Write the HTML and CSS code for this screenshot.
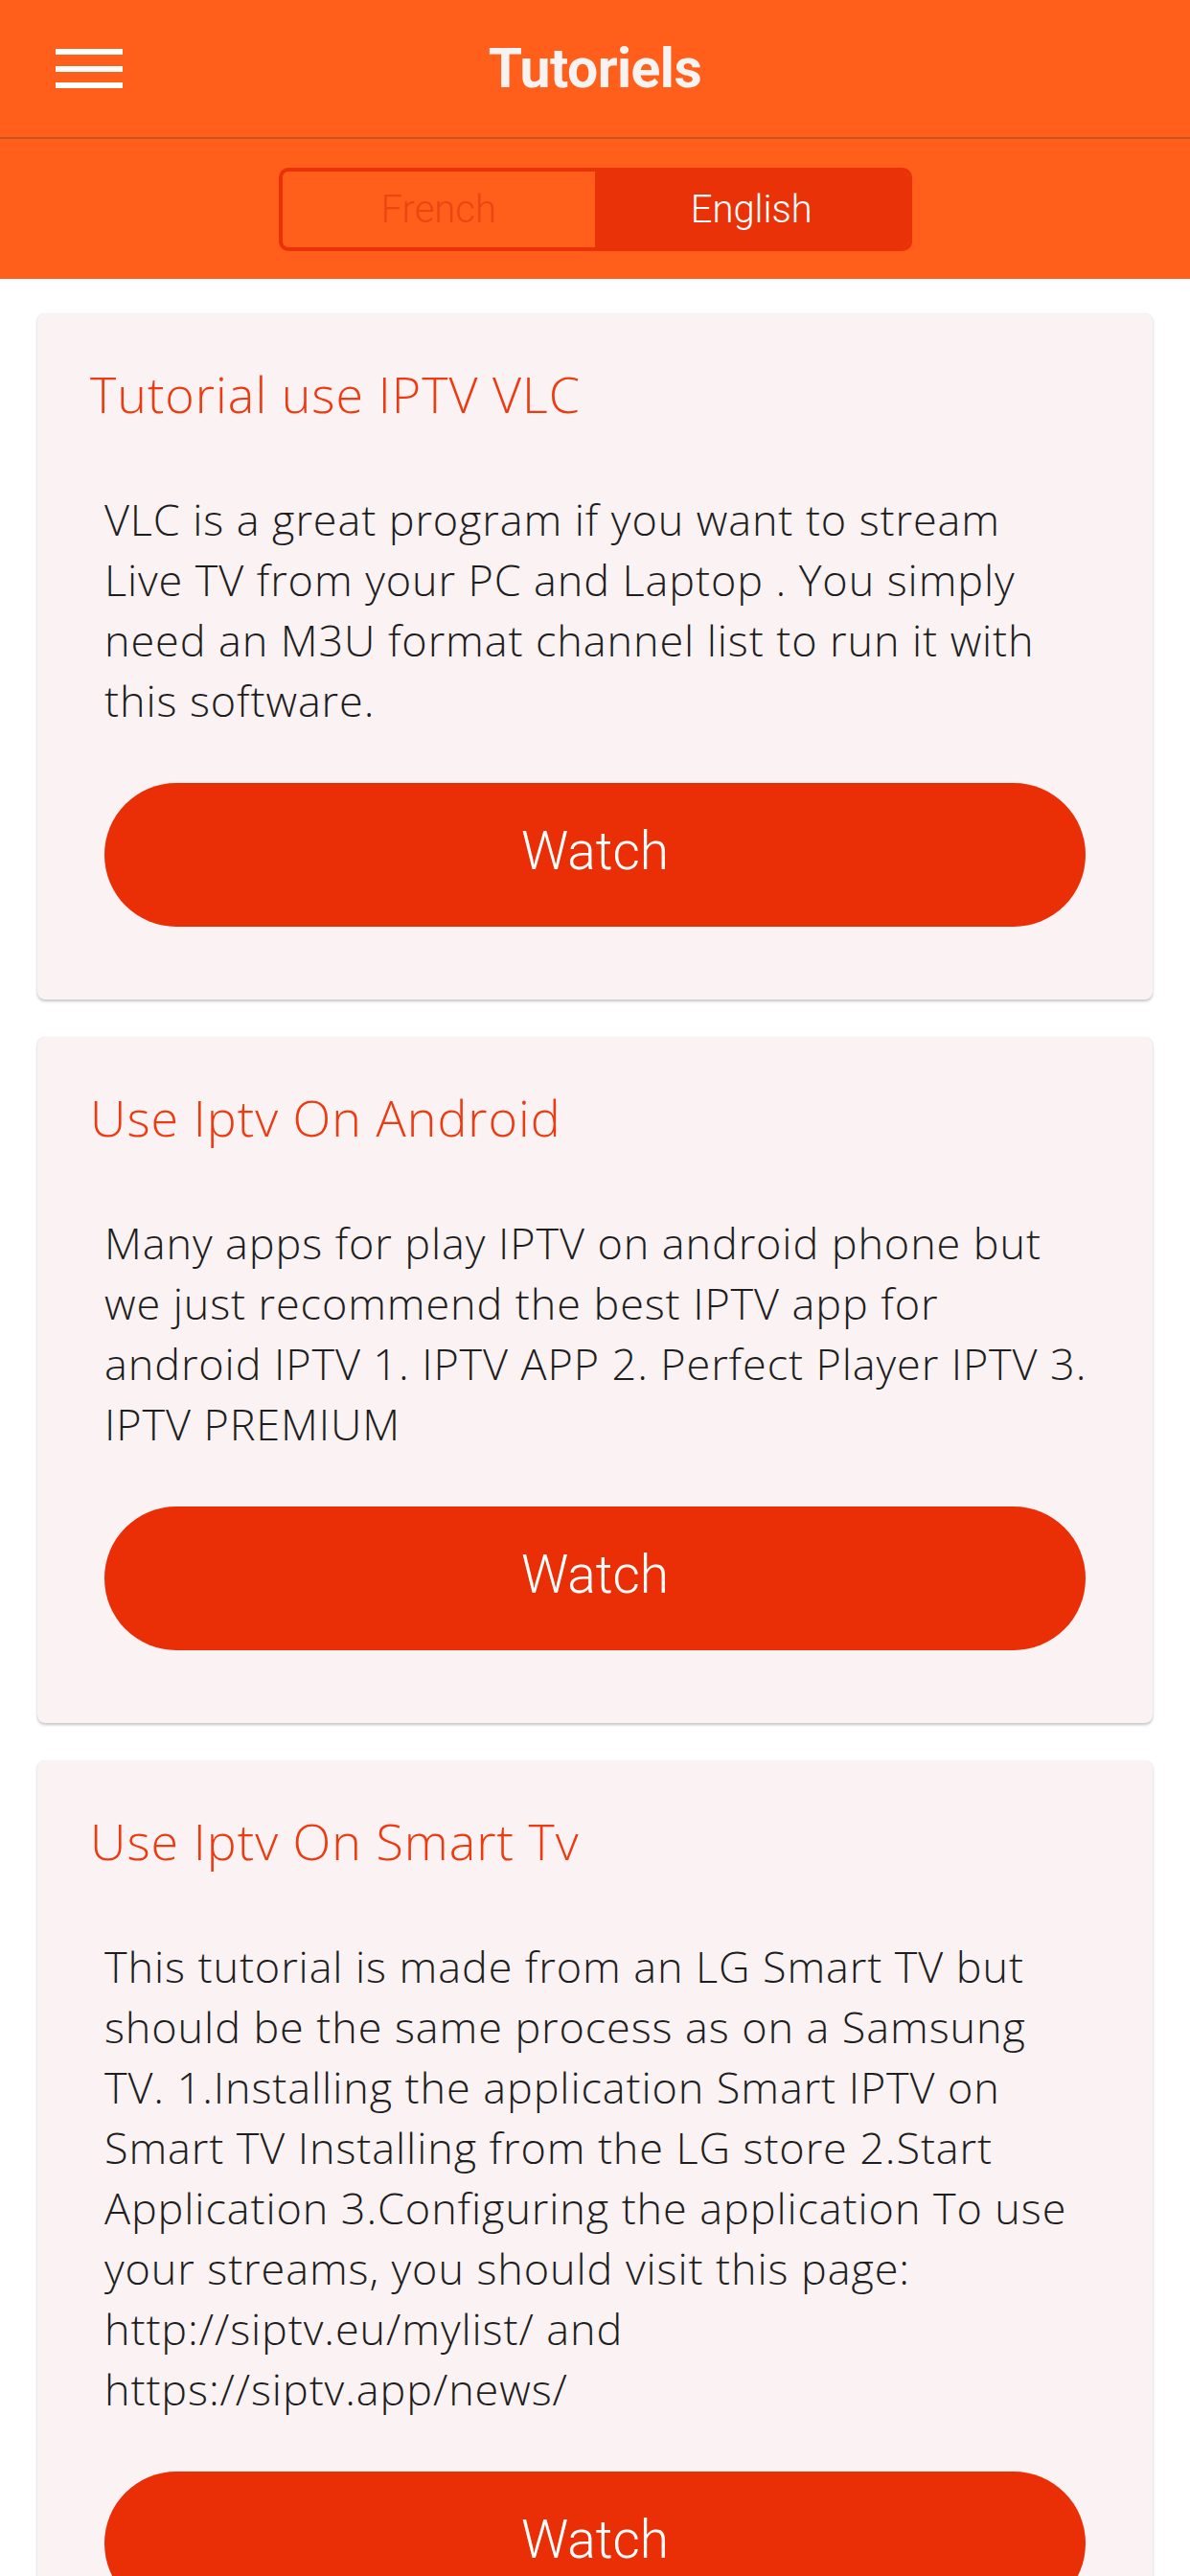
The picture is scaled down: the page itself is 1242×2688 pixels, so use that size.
FILE: index.html
```html
<!DOCTYPE html>
<html>
<head>
<meta charset="utf-8">
<link rel="stylesheet" href="styles.css">
</head>
<body>
<header class="header">
  <div class="topbar">
    <div class="menu" aria-label="menu"><span></span><span></span><span></span></div>
    <h1 class="page-title">Tutoriels</h1>
    <div></div>
  </div>
  <div class="seg-wrap">
    <div class="seg">
      <div class="seg-item">French</div>
      <div class="seg-item active">English</div>
    </div>
  </div>
</header>
<main class="list">
  <section class="card">
    <h2 class="card-title">Tutorial use IPTV VLC</h2>
    <p class="card-text">VLC is a great program if you want to stream<br>Live TV from your PC and Laptop . You simply<br>need an M3U format channel list to run it with<br>this software.</p>
    <div class="btn">Watch</div>
  </section>
  <section class="card">
    <h2 class="card-title">Use Iptv On Android</h2>
    <p class="card-text">Many apps for play IPTV on android phone but<br>we just recommend the best IPTV app for<br>android IPTV 1. IPTV APP 2. Perfect Player IPTV 3.<br>IPTV PREMIUM</p>
    <div class="btn">Watch</div>
  </section>
  <section class="card">
    <h2 class="card-title">Use Iptv On Smart Tv</h2>
    <p class="card-text">This tutorial is made from an LG Smart TV but<br>should be the same process as on a Samsung<br>TV. 1.Installing the application Smart IPTV on<br>Smart TV Installing from the LG store 2.Start<br>Application 3.Configuring the application To use<br>your streams, you should visit this page:<br>http://siptv.eu/mylist/ and<br>https://siptv.app/news/</p>
    <div class="btn">Watch</div>
  </section>
</main>
</body>
</html>
```
FILE: styles.css
```css
* { box-sizing: border-box; }
html, body { margin: 0; padding: 0; }
body {
  width: 1242px;
  background: #ffffff;
  font-family: "Open Sans", "Lato", sans-serif;
  overflow: hidden;
}
.header {
  background: #ff5f1b;
}
.topbar {
  height: 145px;
  border-bottom: 2px solid #c9521f;
  display: grid;
  grid-template-columns: 1fr auto 1fr;
  align-items: center;
}
.menu {
  margin-left: 58px;
  width: 70px;
  display: flex;
  flex-direction: column;
  gap: 11.5px;
}
.menu span {
  display: block;
  height: 6px;
  background: #ffffff;
}
.page-title {
  margin: 0;
  font-family: "Roboto", sans-serif;
  font-weight: 700;
  font-size: 57px;
  color: #f7f3f2;
  letter-spacing: -0.5px;
}
.seg-wrap {
  height: 146px;
  display: flex;
  justify-content: center;
  padding-top: 30px;
}
.seg {
  width: 661px;
  height: 87px;
  border: 4px solid #e93208;
  border-radius: 10px;
  display: flex;
  overflow: hidden;
}
.seg-item {
  flex: 1;
  display: flex;
  align-items: center;
  justify-content: center;
  font-family: "Roboto", sans-serif;
  font-weight: 300;
  font-size: 40px;
  color: #ec4512;
}
.seg-item.active {
  background: #e93208;
  color: #ffffff;
}
.list {
  padding: 36px 39px 0;
  display: flex;
  flex-direction: column;
  gap: 39px;
}
.card {
  background: #fbf2f3;
  border-radius: 8px;
  box-shadow: 0 2px 3px rgba(0,0,0,0.22), 0 0 1px rgba(0,0,0,0.12);
  padding: 52px 70px 76px;
}
.card-title {
  margin: 0 0 68px -15px;
  font-weight: 300;
  font-size: 52px;
  line-height: 63px;
  color: #ee3a10;
  letter-spacing: 1px;
}
.card-text {
  margin: 0 0 55px;
  font-weight: 300;
  font-size: 45px;
  line-height: 63px;
  color: #1e1e1e;
  white-space: nowrap;
  letter-spacing: 0.9px;
}
.btn {
  height: 150px;
  border-radius: 75px;
  background: #ea2f07;
  color: #ffffff;
  display: flex;
  align-items: center;
  justify-content: center;
  padding-bottom: 8px;
  font-family: "Roboto", sans-serif;
  font-weight: 300;
  font-size: 55px;
}
```
